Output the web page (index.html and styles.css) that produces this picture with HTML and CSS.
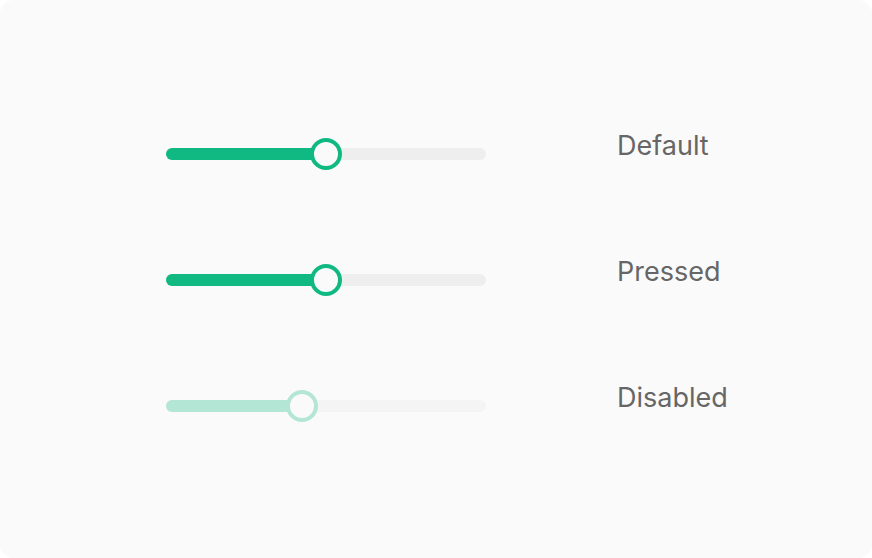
FILE: index.html
```html
<!DOCTYPE html>
<html lang="en">
<head>
<meta charset="utf-8">
<title>Slider states</title>
<link rel="stylesheet" href="styles.css">
</head>
<body>
<div class="panel">
  <div class="row">
    <div class="slider">
      <div class="track"></div>
      <div class="fill" style="width: 160px"></div>
      <div class="thumb" style="left: 144px"></div>
    </div>
    <div class="label">Default</div>
  </div>
  <div class="row">
    <div class="slider">
      <div class="track"></div>
      <div class="fill" style="width: 160px"></div>
      <div class="thumb" style="left: 144px"></div>
    </div>
    <div class="label">Pressed</div>
  </div>
  <div class="row disabled">
    <div class="slider">
      <div class="track"></div>
      <div class="fill" style="width: 136px"></div>
      <div class="thumb" style="left: 120px"></div>
    </div>
    <div class="label">Disabled</div>
  </div>
</div>
</body>
</html>
```

FILE: styles.css
```css
html, body {
  margin: 0;
  padding: 0;
  background: #ffffff;
}

.panel {
  width: 872px;
  height: 558px;
  box-sizing: border-box;
  background: #fafafa;
  border-radius: 14px;
  padding: 138px 0 0 166px;
  display: flex;
  flex-direction: column;
  gap: 94px;
  font-family: Inter, "Noto Sans", sans-serif;
}

.row {
  display: flex;
  align-items: center;
  height: 32px;
  gap: 131px;
}

.slider {
  position: relative;
  width: 320px;
  height: 32px;
}

.track {
  position: absolute;
  left: 0;
  right: 0;
  top: 10px;
  height: 12px;
  border-radius: 6px;
  background: #eeeeee;
}

.fill {
  position: absolute;
  left: 0;
  top: 10px;
  height: 12px;
  border-radius: 6px;
  background: #10b981;
}

.thumb {
  position: absolute;
  top: 0;
  width: 32px;
  height: 32px;
  box-sizing: border-box;
  border-radius: 50%;
  border: 4px solid #10b981;
  background: #fafafa;
}

.label {
  font-size: 27px;
  line-height: 32px;
  color: #666666;
  margin-bottom: 16px;
}

.disabled .track {
  background: #f4f4f4;
}

.disabled .fill {
  background: #b4e6d5;
}

.disabled .thumb {
  border-color: #b4e6d5;
}
```
